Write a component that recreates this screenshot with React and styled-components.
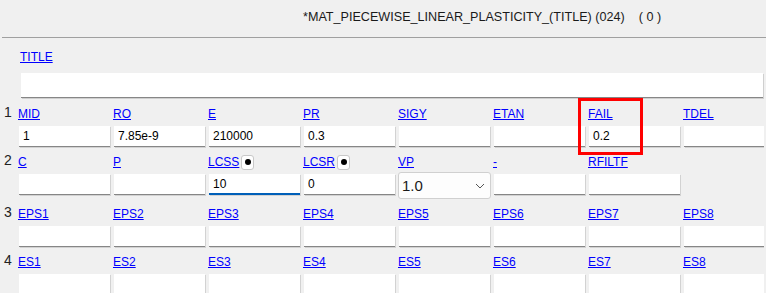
import React from 'react';
import styled, { createGlobalStyle } from 'styled-components';

const GlobalStyle = createGlobalStyle`
  html, body {
    margin: 0;
    padding: 0;
    background: #f0f0f0;
    font-family: "Liberation Sans", Arial, sans-serif;
  }
`;

const Page = styled.div`
  width: 766px;
  height: 293px;
  overflow: hidden;
`;

const Header = styled.div`
  height: 28px;
  margin-left: 2px;
  padding: 9px 0 0 301px;
  border-bottom: 1px solid #a0a0a0;
  font-size: 12.6px;
  line-height: 16px;
  color: #1a1a1a;
  white-space: pre;
`;

const Form = styled.div`
  margin-right: 2px;
  overflow: hidden;
`;

const TitleBlock = styled.div`
  display: flex;
  flex-direction: column;
  align-items: flex-start;
  padding: 11px 3px 0 20px;
  gap: 8px;
`;

const Label = styled.a`
  display: inline-flex;
  align-items: center;
  gap: 2px;
  font-size: 12px;
  line-height: 16px;
  color: #0000ff;
  text-decoration: underline;
  white-space: nowrap;
`;

const TitleInput = styled.input`
  box-sizing: border-box;
  width: 742px;
  height: 25px;
  margin-left: 1px;
  border: none;
  border-bottom: 1px solid #868686;
  box-shadow: 1px 1px 0 #cfcfcf;
  background: #fff;
  outline: none;
`;

const Card = styled.div`
  display: grid;
  grid-template-columns: 18px repeat(8, 95px);
  grid-template-rows: 16px auto;
  row-gap: 6px;
  align-items: start;
  margin-top: ${(p) => p.$top}px;
`;

const RowNumber = styled.div`
  padding-left: 4px;
  font-size: 14px;
  line-height: 16px;
  color: #222;
`;

const LabelCell = styled.div`
  position: relative;
`;

const Field = styled.input`
  box-sizing: border-box;
  width: 91px;
  height: 21px;
  margin-left: 1px;
  padding: 0 4px;
  border: none;
  border-bottom: ${(p) => (p.$focused ? '2px solid #005fb8' : '1px solid #868686')};
  box-shadow: 1px 1px 0 #d2d2d2;
  background: #fff;
  font-family: "Liberation Sans", Arial, sans-serif;
  font-size: 12px;
  color: #000;
  outline: none;
`;

const DotButton = styled.span`
  box-sizing: border-box;
  display: inline-flex;
  align-items: center;
  justify-content: center;
  width: 13px;
  height: 15px;
  border: 1px solid #c8c8c8;
  border-radius: 3px;
  background: #fff;

  &::after {
    content: '';
    width: 6px;
    height: 6px;
    border-radius: 50%;
    background: #000;
  }
`;

const Select = styled.div`
  box-sizing: border-box;
  display: flex;
  align-items: center;
  justify-content: space-between;
  width: 93px;
  height: 27px;
  margin-top: -2px;
  padding: 0 5px 0 3px;
  border: 1px solid #d0d0d0;
  border-radius: 3px;
  background: #fdfdfd;
  font-size: 15px;
  color: #1a1a1a;
`;

const Highlight = styled.div`
  position: absolute;
  left: -10px;
  top: -6px;
  width: 65px;
  height: 57px;
  box-sizing: border-box;
  border: 3px solid #ff0000;
  pointer-events: none;
`;

const Chevron = () => (
  <svg width="10" height="6" viewBox="0 0 10 6">
    <path d="M1 1 L5 5 L9 1" fill="none" stroke="#555" strokeWidth="1" />
  </svg>
);

const rows = [
  {
    n: 1,
    top: 6,
    fields: [
      { name: 'MID', value: '1' },
      { name: 'RO', value: '7.85e-9' },
      { name: 'E', value: '210000' },
      { name: 'PR', value: '0.3' },
      { name: 'SIGY' },
      { name: 'ETAN' },
      { name: 'FAIL', value: '0.2', marked: true },
      { name: 'TDEL' },
    ],
  },
  {
    n: 2,
    top: 5,
    fields: [
      { name: 'C' },
      { name: 'P' },
      { name: 'LCSS', value: '10', dot: true, focused: true },
      { name: 'LCSR', value: '0', dot: true },
      { name: 'VP', value: '1.0', select: true },
      { name: '-' },
      { name: 'RFILTF' },
      null,
    ],
  },
  {
    n: 3,
    top: 5,
    fields: [1, 2, 3, 4, 5, 6, 7, 8].map((i) => ({ name: `EPS${i}` })),
  },
  {
    n: 4,
    top: 5,
    fields: [1, 2, 3, 4, 5, 6, 7, 8].map((i) => ({ name: `ES${i}` })),
  },
];

const CardRow = ({ row }) => (
  <Card $top={row.top}>
    <RowNumber>{row.n}</RowNumber>
    {row.fields.map((f, i) => (
      <LabelCell key={`l${i}`}>
        {f && (
          <Label href="#">
            <span>{f.name}</span>
            {f.dot && <DotButton />}
          </Label>
        )}
        {f && f.marked && <Highlight />}
      </LabelCell>
    ))}
    <div />
    {row.fields.map((f, i) => {
      if (!f) return <div key={`f${i}`} />;
      if (f.select) {
        return (
          <Select key={`f${i}`}>
            <span>{f.value}</span>
            <Chevron />
          </Select>
        );
      }
      return <Field key={`f${i}`} defaultValue={f.value || ''} $focused={f.focused} />;
    })}
  </Card>
);

const App = () => (
  <Page>
    <GlobalStyle />
    <Header>{'*MAT_PIECEWISE_LINEAR_PLASTICITY_(TITLE) (024)    ( 0 )'}</Header>
    <Form>
      <TitleBlock>
        <Label href="#">TITLE</Label>
        <TitleInput />
      </TitleBlock>
      {rows.map((row) => (
        <CardRow key={row.n} row={row} />
      ))}
    </Form>
  </Page>
);

export default App;
